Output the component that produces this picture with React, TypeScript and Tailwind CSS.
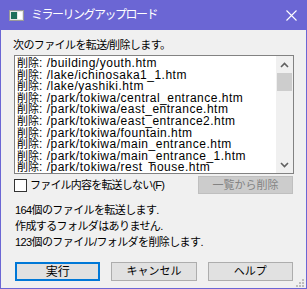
import React from 'react';

const FILES = [
  '/building/youth.htm',
  '/lake/ichinosaka1_1.htm',
  '/lake/yashiki.htm',
  '/park/tokiwa/central_entrance.htm',
  '/park/tokiwa/east_entrance.htm',
  '/park/tokiwa/east_entrance2.htm',
  '/park/tokiwa/fountain.htm',
  '/park/tokiwa/main_entrance.htm',
  '/park/tokiwa/main_entrance_1.htm',
  '/park/tokiwa/rest_house.htm',
];

const FONT = "font-['Liberation_Sans','Noto_Sans_CJK_JP',sans-serif]";

function AppIcon() {
  return (
    <svg width="15" height="11" viewBox="0 0 15 11">
      <rect x="0.5" y="0.5" width="14" height="10" fill="#e8e8e8" stroke="#9a9a9a" />
      <rect x="2" y="2" width="6" height="7" fill="#1f6f5c" />
      <rect x="9" y="2" width="4" height="7" fill="#ffffff" />
    </svg>
  );
}

function CloseIcon() {
  return (
    <svg width="11" height="11" viewBox="0 0 11 11">
      <path d="M0.5 0.5 L10.5 10.5 M10.5 0.5 L0.5 10.5" stroke="#ffffff" strokeWidth="1.1" />
    </svg>
  );
}

function Chevron({ down }: { down?: boolean }) {
  return (
    <svg width="9" height="6" viewBox="0 0 9 6">
      <path d={down ? 'M1 1 L4.5 4.5 L8 1' : 'M1 5 L4.5 1.5 L8 5'} fill="none" stroke="#606060" strokeWidth="1.6" />
    </svg>
  );
}

function Grip() {
  const dots = [
    [6, 0],
    [3, 3], [6, 3],
    [0, 6], [3, 6], [6, 6],
  ];
  return (
    <svg width="8" height="8" viewBox="0 0 8 8" className="absolute right-[2px] bottom-[1px]">
      {dots.map(([x, y], i) => (
        <rect key={i} x={x} y={y} width="2" height="2" fill="#bdbdbd" />
      ))}
    </svg>
  );
}

export default function App() {
  return (
    <div className={`w-[307px] h-[289px] flex flex-col bg-[#6b66d4] ${FONT} text-[12px] text-black`}>
      {/* Title bar */}
      <div className="h-[30px] shrink-0 flex items-center pl-[9px] pr-[10px]">
        <AppIcon />
        <span className="ml-[7px] text-white text-[12px] tracking-[-1.5px] leading-none">ミラーリングアップロード</span>
        <div className="ml-auto">
          <CloseIcon />
        </div>
      </div>

      {/* Body */}
      <div className="relative flex-1 mx-[1px] mb-[1px] bg-[#f0f0f0] pl-[12px] pr-[13px] flex flex-col">
        <div className="mt-[8px] h-[14px] leading-[14px] text-[11px] tracking-[-0.6px]">次のファイルを転送/削除します。</div>

        {/* List box */}
        <div className="mt-[3px] ml-[1px] w-[280px] h-[119px] border border-[#828282] bg-white flex overflow-hidden">
          <div className="flex-1 pl-[2px] pt-[2px]">
            {FILES.map((f) => (
              <div key={f} className="h-[11.6px] leading-[11.6px] whitespace-nowrap">
                <span className="text-[11px]">削除</span>
                <span className="tracking-[0.5px] whitespace-pre">: {f}</span>
              </div>
            ))}
          </div>
          <div className="w-[17px] bg-[#f0f0f0] flex flex-col">
            <div className="h-[17px] flex items-center justify-center">
              <Chevron />
            </div>
            <div className="h-[18px] mx-[1px] bg-[#cdcdcd]" />
            <div className="flex-1" />
            <div className="h-[17px] flex items-center justify-center">
              <Chevron down />
            </div>
          </div>
        </div>

        {/* Checkbox row */}
        <div className="mt-[2px] h-[18px] flex items-center">
          <div className="ml-[1px] w-[13px] h-[13px] border border-[#333333] bg-white" />
          <span className="ml-[3px] text-[11px] tracking-[-0.8px]">ファイル内容を転送しない(F)</span>
          <div className="ml-auto w-[95px] h-[18px] bg-[#cccccc] border border-[#bfbfbf] flex items-center justify-center text-[11px] text-[#838383]">
            一覧から削除
          </div>
        </div>

        {/* Status */}
        <div className="mt-[8px] ml-[2px] text-[11px] leading-[16px] tracking-[-0.6px]">
          <div>164個のファイルを転送します.</div>
          <div>作成するフォルダはありません.</div>
          <div>123個のファイル/フォルダを削除します.</div>
        </div>

        {/* Buttons */}
        <div className="mt-[12px] ml-[2px] flex gap-[11px] text-[11px]">
          <button className="w-[86px] h-[19px] bg-[#e1e1e1] border-2 border-[#0078d7] flex items-center justify-center text-[12px]">
            実行
          </button>
          <button className="w-[86px] h-[19px] bg-[#e1e1e1] border border-[#adadad] flex items-center justify-center">
            キャンセル
          </button>
          <button className="w-[86px] h-[19px] bg-[#e1e1e1] border border-[#adadad] flex items-center justify-center">
            ヘルプ
          </button>
        </div>

        <Grip />
      </div>
    </div>
  );
}
